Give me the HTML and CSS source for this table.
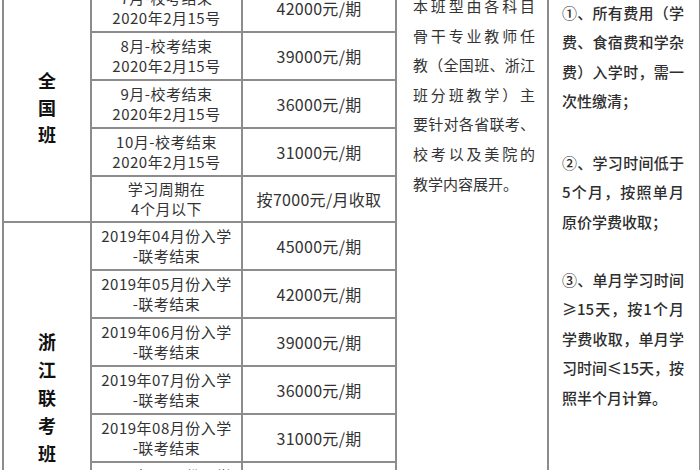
FILE: index.html
```html
<!DOCTYPE html>
<html lang="zh-CN">
<head>
<meta charset="utf-8">
<title>收费标准</title>
<link rel="stylesheet" href="styles.css">
</head>
<body>
<table class="fees">
  <colgroup>
    <col class="c-region">
    <col class="c-term">
    <col class="c-price">
    <col class="c-desc">
    <col class="c-notes">
  </colgroup>
  <tr>
    <td class="region region-nat" rowspan="5"><div class="vtext"><span>全</span><span>国</span><span>班</span></div></td>
    <td class="term">7月-校考结束<br>2020年2月15号</td>
    <td class="price">42000元/期</td>
    <td class="desc" rowspan="12">
      <div class="line j">本班型由各科目</div>
      <div class="line j">骨干专业教师任</div>
      <div class="line j">教（全国班、浙江</div>
      <div class="line j">班分班教学）主</div>
      <div class="line j">要针对各省联考、</div>
      <div class="line j">校考以及美院的</div>
      <div class="line">教学内容展开。</div>
    </td>
    <td class="notes" rowspan="12">
      <div class="line j">①、所有费用（学</div>
      <div class="line j">费、食宿费和学杂</div>
      <div class="line j">费）入学时，需一</div>
      <div class="line">次性缴清；</div>
      <div class="gap gap-1"></div>
      <div class="line j">②、学习时间低于</div>
      <div class="line j">5个月，按照单月</div>
      <div class="line">原价学费收取；</div>
      <div class="gap gap-2"></div>
      <div class="line j">③、单月学习时间</div>
      <div class="line j">≥15天，按1个月</div>
      <div class="line j">学费收取，单月学</div>
      <div class="line j">习时间≤15天，按</div>
      <div class="line">照半个月计算。</div>
    </td>
  </tr>
  <tr>
    <td class="term">8月-校考结束<br>2020年2月15号</td>
    <td class="price">39000元/期</td>
  </tr>
  <tr>
    <td class="term">9月-校考结束<br>2020年2月15号</td>
    <td class="price">36000元/期</td>
  </tr>
  <tr>
    <td class="term">10月-校考结束<br>2020年2月15号</td>
    <td class="price">31000元/期</td>
  </tr>
  <tr class="short">
    <td class="term">学习周期在<br>4个月以下</td>
    <td class="price">按7000元/月收取</td>
  </tr>
  <tr>
    <td class="region region-zj" rowspan="7"><div class="vtext"><span>浙</span><span>江</span><span>联</span><span>考</span><span>班</span></div></td>
    <td class="term">2019年04月份入学<br>-联考结束</td>
    <td class="price">45000元/期</td>
  </tr>
  <tr>
    <td class="term">2019年05月份入学<br>-联考结束</td>
    <td class="price">42000元/期</td>
  </tr>
  <tr>
    <td class="term">2019年06月份入学<br>-联考结束</td>
    <td class="price">39000元/期</td>
  </tr>
  <tr>
    <td class="term">2019年07月份入学<br>-联考结束</td>
    <td class="price">36000元/期</td>
  </tr>
  <tr>
    <td class="term">2019年08月份入学<br>-联考结束</td>
    <td class="price">31000元/期</td>
  </tr>
  <tr>
    <td class="term">2019年09月份入学<br>-联考结束</td>
    <td class="price">28000元/期</td>
  </tr>
  <tr>
    <td class="term">2019年10月份入学<br>-联考结束</td>
    <td class="price">25000元/期</td>
  </tr>
</table>
</body>
</html>
```
FILE: styles.css
```css
html, body {
  margin: 0;
  padding: 0;
  background: #ffffff;
}

body {
  font-family: "Noto Sans CJK SC", "Noto Sans", sans-serif;
  color: #333333;
  overflow: hidden;
}

.fees {
  border-collapse: collapse;
  table-layout: fixed;
  width: 697px;
  margin: -17px 0 0 2px;
}

.c-region { width: 88px; }
.c-term { width: 151px; }
.c-price { width: 154px; }
.c-desc { width: 152px; }
.c-notes { width: 152px; }

.fees td {
  border: 2px solid #8c8c8c;
  padding: 0;
  text-align: center;
  vertical-align: middle;
}

.fees tr {
  height: 48px;
}

.fees tr.short {
  height: 46px;
}

.fees td.term {
  font-size: 15px;
  line-height: 20px;
  letter-spacing: 0.5px;
  color: #333333;
}

.fees td.price {
  font-size: 16px;
  line-height: 20px;
  letter-spacing: 0.3px;
  color: #333333;
}

.fees td.region {
  font-size: 18px;
  font-weight: 700;
  color: #111111;
}

.vtext {
  display: flex;
  flex-direction: column;
  align-items: center;
}

.vtext span {
  display: block;
  line-height: 18px;
  height: 18px;
}

.region-nat .vtext {
  gap: 9px;
  padding-top: 8px;
}

.region-zj .vtext {
  gap: 10px;
  padding-top: 13px;
}

.fees td.desc,
.fees td.notes {
  text-align: left;
  vertical-align: top;
  font-size: 15px;
  color: #333333;
}

.fees td.desc {
  padding: 6px 12px 0 16px;
  line-height: 29.6px;
}

.fees td.notes {
  padding: 13px 15px 0 13px;
  line-height: 29.4px;
  font-weight: 500;
  color: #2e2e2e;
}

.line {
  white-space: nowrap;
  text-align: left;
}

.line.j {
  text-align: justify;
  text-align-last: justify;
}

.gap-1 {
  height: 32.4px;
}

.gap-2 {
  height: 28.8px;
}
```
